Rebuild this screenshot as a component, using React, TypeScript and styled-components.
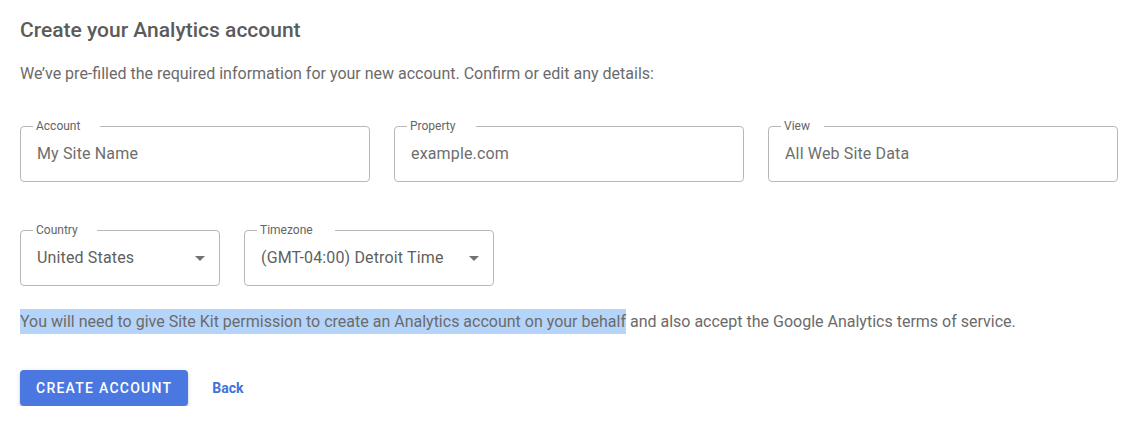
import React from "react";
import styled, { createGlobalStyle } from "styled-components";

const GlobalStyle = createGlobalStyle`
  html, body {
    margin: 0;
    padding: 0;
    background: #fff;
  }
  body {
    font-family: Roboto, "Liberation Sans", Arial, sans-serif;
    -webkit-font-smoothing: antialiased;
  }
`;

const Page = styled.div`
  padding: 16px 20px 0 20px;
  display: flex;
  flex-direction: column;
  align-items: flex-start;
`;

const Title = styled.h3`
  margin: 0;
  font-size: 21px;
  line-height: 28px;
  font-weight: 500;
  color: #5b5b5b;
`;

const Lead = styled.p`
  margin: 18px 0 0 0;
  font-size: 16px;
  line-height: 24px;
  color: #6b6b6b;
`;

const FieldRow = styled.div<{ $top: number }>`
  display: flex;
  gap: 24px;
  margin-top: ${(p) => p.$top}px;
`;

const FieldWrap = styled.div<{ $width: number }>`
  position: relative;
  width: ${(p) => p.$width}px;
  height: 56px;
  flex: none;
`;

const Outline = styled.fieldset`
  box-sizing: border-box;
  margin: 0;
  padding: 0 16px;
  height: 56px;
  border: 1px solid #b7b7b7;
  border-radius: 4px;
  display: flex;
  align-items: center;
  position: relative;
`;

const Notch = styled.legend`
  margin-left: -4px;
  padding: 0 4px;
  line-height: 0;
  font-size: 16px;
  color: transparent;
  float: none;
  position: absolute;
  top: -1px;
  left: 16px;
  background: #fff;
  height: 2px;
  & span {
    visibility: hidden;
    white-space: nowrap;
  }
`;

const FloatLabel = styled.span`
  position: absolute;
  top: -8px;
  left: 16px;
  font-size: 12px;
  line-height: 16px;
  color: #646464;
  white-space: nowrap;
`;

const Value = styled.span<{ $dark?: boolean }>`
  font-size: 16px;
  line-height: 24px;
  color: ${(p) => (p.$dark ? "#5f5f5f" : "#6e6e6e")};
  letter-spacing: 0.15px;
  white-space: nowrap;
  flex: 1;
  overflow: hidden;
`;

const Caret = styled.svg`
  flex: none;
  width: 10px;
  height: 5px;
  margin-right: -2px;
`;

const Note = styled.p`
  margin: 24px 0 0 0;
  font-size: 16px;
  line-height: 24px;
  color: #6b6b6b;
  white-space: nowrap;
`;

const Selected = styled.span`
  background: #b5d4fa;
  padding: 3px 0;
`;

const Actions = styled.div`
  display: flex;
  align-items: center;
  gap: 24px;
  margin-top: 36px;
`;

const PrimaryButton = styled.button`
  height: 36px;
  padding: 0 16px;
  border: none;
  border-radius: 4px;
  background: #4a77e0;
  color: #fff;
  font-family: Roboto, "Liberation Sans", Arial, sans-serif;
  font-size: 14px;
  font-weight: 500;
  letter-spacing: 1.25px;
  text-transform: uppercase;
  box-shadow: 0 3px 1px -2px rgba(0, 0, 0, 0.2), 0 2px 2px 0 rgba(0, 0, 0, 0.14),
    0 1px 5px 0 rgba(0, 0, 0, 0.12);
  cursor: pointer;
`;

const TextLink = styled.a`
  font-size: 14px;
  font-weight: 700;
  color: #3f72dd;
  text-decoration: none;
`;

type FieldProps = {
  label: string;
  value: string;
  width: number;
  select?: boolean;
};

const Field: React.FC<FieldProps> = ({ label, value, width, select }) => (
  <FieldWrap $width={width}>
    <Outline>
      <Notch>
        <span>{label}</span>
      </Notch>
      <Value $dark={select}>{value}</Value>
      {select && (
        <Caret viewBox="0 0 10 5">
          <path d="M0 0 L5 5 L10 0 Z" fill="#727272" />
        </Caret>
      )}
    </Outline>
    <FloatLabel>{label}</FloatLabel>
  </FieldWrap>
);

const App: React.FC = () => {
  return (
    <>
      <GlobalStyle />
      <Page>
        <Title>Create your Analytics account</Title>
        <Lead>
          We’ve pre-filled the required information for your new account. Confirm or edit any
          details:
        </Lead>
        <FieldRow $top={40}>
          <Field label="Account" value="My Site Name" width={350} />
          <Field label="Property" value="example.com" width={350} />
          <Field label="View" value="All Web Site Data" width={350} />
        </FieldRow>
        <FieldRow $top={48}>
          <Field label="Country" value="United States" width={200} select />
          <Field label="Timezone" value="(GMT-04:00) Detroit Time" width={250} select />
        </FieldRow>
        <Note>
          <Selected>
            You will need to give Site Kit permission to create an Analytics account on your behalf
          </Selected>{" "}
          and also accept the Google Analytics terms of service.
        </Note>
        <Actions>
          <PrimaryButton>Create account</PrimaryButton>
          <TextLink href="#">Back</TextLink>
        </Actions>
      </Page>
    </>
  );
};

export default App;
